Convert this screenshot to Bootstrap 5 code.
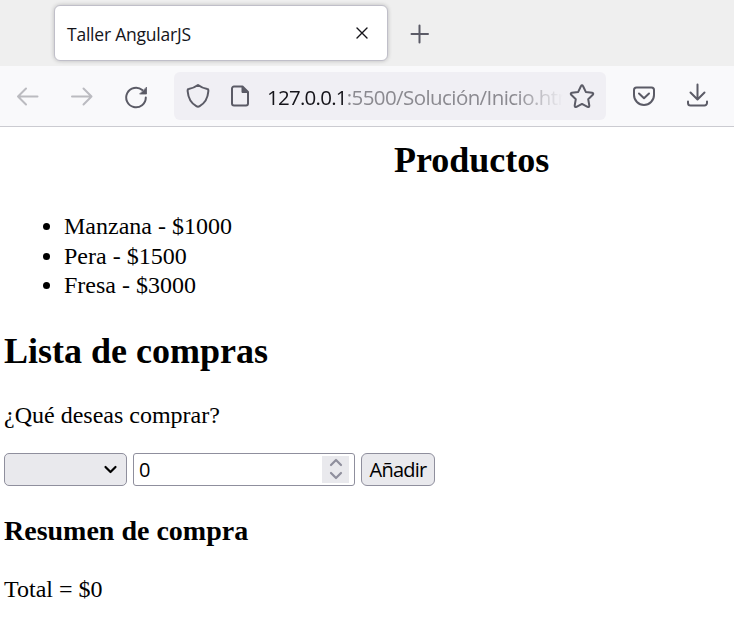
<!DOCTYPE html>
<html lang="es">
<head>
<meta charset="utf-8">
<meta name="viewport" content="width=device-width, initial-scale=1">
<title>Taller AngularJS</title>
<link href="https://cdn.jsdelivr.net/npm/bootstrap@5.3.0/dist/css/bootstrap.min.css" rel="stylesheet">
<style>
body{background:#fff;color:#000;height:632px;overflow:hidden;font-family:"Liberation Serif",serif;font-size:24px}
svg{display:block;flex:none;fill:none;stroke-linecap:round;stroke-linejoin:round;overflow:visible}
.ui{font-family:"Open Sans","Noto Sans",sans-serif}
.tabstrip{height:66px;background:#efefef;padding:5px 0 0 54px}
.tab-box{width:334px;height:56px;background:#fff;border:1px solid #c0bfc9;border-radius:6px;box-shadow:0 0 4px rgba(0,0,0,.22);padding:0 18px 0 12px}
.tab-title{font-size:17.5px;letter-spacing:-.22px;line-height:24px;color:#15141a;padding-top:1px}
.plus{margin:5px 0 0 22px}
.toolbar{height:61px;background:#f9f9fb;border-bottom:1px solid #cbcbd1;padding-left:16px}
.urlbar{width:432px;height:48px;background:#f0eff4;border-radius:6px;margin-left:26px;padding:0 11px 0 12px}
.address{width:296px;margin-left:17px;padding-top:2px;font-size:20.5px;line-height:30px;letter-spacing:-.58px;color:#8b8a90;-webkit-mask-image:linear-gradient(90deg,#000 84%,transparent);mask-image:linear-gradient(90deg,#000 84%,transparent)}
.host{color:#15141a;letter-spacing:-.75px}
main{padding-left:4px}
h2,h3{font-weight:700;margin:0}
h2{font-size:36px;line-height:40px}
h3{font-size:28px;line-height:32px;margin-top:29px}
.products-title{margin-top:13px;padding-left:390px}
.products{margin:32px 0 30px;padding-left:60px;line-height:29.5px}
.line{line-height:30px;margin:0}
.controls{gap:6px;margin-top:23px}
.ctl{height:33px;border:1px solid #8f8f9d;font-size:20px;color:#000;line-height:30px}
.pick{width:123px;background:#e9e9ed;border-radius:5px;padding-right:9px}
.qty{width:222px;border-radius:3px;padding:0 5px}
.amount{padding-top:2px}
.spin{width:27px;height:27px;background:#e9e9ed}
.add{width:74px;background:#e9e9ed;border-radius:6px;padding:1px 0 0;letter-spacing:-.75px}
</style>
</head>
<body>
<header class="ui">
  <div class="tabstrip d-flex align-items-start">
    <div class="tab-box d-flex align-items-center justify-content-between">
      <span class="tab-title text-nowrap">Taller AngularJS</span>
      <svg width="14" height="14" stroke="#15141a" stroke-width="1.4"><path d="M2 2l10 10M12 2L2 12"/></svg>
    </div>
    <svg class="plus" width="20" height="48" stroke="#5b5b66" stroke-width="2"><path d="M1.500 24h16.500M9.500 15.500v17"/></svg>
  </div>
  <nav class="toolbar d-flex align-items-center">
    <svg width="24" height="24" stroke="#bbbbc0" stroke-width="2"><path d="M21.500 12.500H2M10 4.500l-8 8 8 8"/></svg>
    <svg width="24" height="24" stroke="#bbbbc0" stroke-width="2" style="margin-left:30px"><path d="M2 12.500h19.500M13.500 4.500l8 8-8 8"/></svg>
    <svg width="24" height="24" stroke="#5b5b66" stroke-width="2" style="margin-left:30px"><path d="M18.300 6A9.800 9.800 0 1 0 21.800 13.500"/><path d="M22.500 3.500v6.500H16z" fill="#5b5b66" stroke-width=".8"/></svg>
    <div class="urlbar d-flex align-items-center">
      <svg width="24" height="26" stroke="#5b5b66" stroke-width="2"><path d="M12 2c3 2.300 6.300 3.400 9.300 4 1.200.2 1.200 1 1 2.500-.6 7.500-4 12-8.600 14.600-1.200.8-2.200.8-3.400 0C5.700 20.500 2.300 16 1.700 8.500 1.500 7 1.500 6.200 2.700 6 5.700 5.400 9 4.300 12 2z"/></svg>
      <svg width="20" height="24" stroke="#5b5b66" stroke-width="2" style="margin-left:20px"><path d="M4 2.500h8.500L18 8v11.500a2 2 0 0 1-2 2H4a2 2 0 0 1-2-2v-15a2 2 0 0 1 2-2z"/><path d="M12 3v5.500h5.500z" fill="#5b5b66" stroke-width="1"/></svg>
      <div class="address text-nowrap overflow-hidden"><span class="host">127.0.0.1</span>:5500/Solución/Inicio.html</div>
      <svg width="26" height="26" stroke="#5b5b66" stroke-width="2" class="ms-auto"><path d="M11.900 3.200q1.100-1.900 2.200 0l2.700 5.700 6.300.9q1.900.5.700 2l-4.600 4.400 1.100 6.300q.1 2-1.800 1.300L13 20.900l-5.500 2.900q-1.900.7-1.800-1.300l1.100-6.300-4.600-4.400q-1.200-1.500.7-2l6.300-.9z"/></svg>
    </div>
    <svg width="24" height="24" stroke="#5b5b66" stroke-width="2" style="margin-left:26px"><path d="M4.500 3.500h15a2.500 2.500 0 0 1 2.500 2.500v5a10 10 0 0 1-20 0V6a2.500 2.500 0 0 1 2.500-2.500zM7 9.500l5 4.800 5-4.800"/></svg>
    <svg width="23" height="26" stroke="#5b5b66" stroke-width="2" style="margin-left:30px"><path d="M11.500 1.500V16M4.500 9.500l7 7 7-7M2 18.500V20a2.500 2.500 0 0 0 2.500 2.500h14A2.500 2.500 0 0 0 21 20v-1.500"/></svg>
  </nav>
</header>
<main>
  <h2 class="products-title">Productos</h2>
  <ul class="products">
    <li>Manzana - $1000</li>
    <li>Pera - $1500</li>
    <li>Fresa - $3000</li>
  </ul>
  <h2>Lista de compras</h2>
  <p class="line" style="margin-top:29px">¿Qué deseas comprar?</p>
  <div class="controls d-flex ui">
    <div class="ctl pick d-flex align-items-center justify-content-end" role="combobox" aria-label="Producto">
      <svg width="14" height="10" stroke="#000" stroke-width="2.200"><path d="M2.500 3l5 5 5-5"/></svg>
    </div>
    <div class="ctl qty d-flex align-items-center justify-content-between" role="spinbutton" aria-label="Cantidad"><span class="amount">0</span>
      <span class="spin d-flex align-items-center justify-content-center"><svg width="14" height="22" stroke="#8f8f9d" stroke-width="2.200"><path d="M2 7l5-5 5 5M2 15l5 5 5-5"/></svg></span>
    </div>
    <button class="ctl add" type="button">Añadir</button>
  </div>
  <h3>Resumen de compra</h3>
  <p class="line" style="margin-top:27px">Total = $0</p>
</main>
<script src="https://cdn.jsdelivr.net/npm/bootstrap@5.3.0/dist/js/bootstrap.bundle.min.js"></script>
</body>
</html>
